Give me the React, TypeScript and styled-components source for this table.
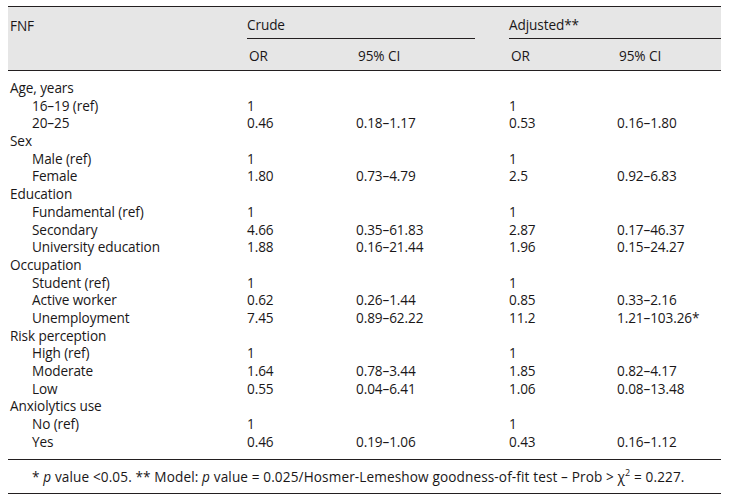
import React from 'react';
import styled, { createGlobalStyle } from 'styled-components';

const GlobalStyle = createGlobalStyle`
  body {
    margin: 0;
    padding: 6px 12px 0 8px;
    background: #fff;
    font-family: "Open Sans", "Liberation Sans", sans-serif;
    color: #1a1718;
  }
`;

const COLS = '239px 109px 153px 108px 1fr';

interface Row {
  label: string;
  sub?: boolean;
  values?: [string, string, string, string];
}

const rows: Row[] = [
  { label: 'Age, years' },
  { label: '16–19 (ref)', sub: true, values: ['1', '', '1', ''] },
  { label: '20–25', sub: true, values: ['0.46', '0.18–1.17', '0.53', '0.16–1.80'] },
  { label: 'Sex' },
  { label: 'Male (ref)', sub: true, values: ['1', '', '1', ''] },
  { label: 'Female', sub: true, values: ['1.80', '0.73–4.79', '2.5', '0.92–6.83'] },
  { label: 'Education' },
  { label: 'Fundamental (ref)', sub: true, values: ['1', '', '1', ''] },
  { label: 'Secondary', sub: true, values: ['4.66', '0.35–61.83', '2.87', '0.17–46.37'] },
  { label: 'University education', sub: true, values: ['1.88', '0.16–21.44', '1.96', '0.15–24.27'] },
  { label: 'Occupation' },
  { label: 'Student (ref)', sub: true, values: ['1', '', '1', ''] },
  { label: 'Active worker', sub: true, values: ['0.62', '0.26–1.44', '0.85', '0.33–2.16'] },
  { label: 'Unemployment', sub: true, values: ['7.45', '0.89–62.22', '11.2', '1.21–103.26*'] },
  { label: 'Risk perception' },
  { label: 'High (ref)', sub: true, values: ['1', '', '1', ''] },
  { label: 'Moderate', sub: true, values: ['1.64', '0.78–3.44', '1.85', '0.82–4.17'] },
  { label: 'Low', sub: true, values: ['0.55', '0.04–6.41', '1.06', '0.08–13.48'] },
  { label: 'Anxiolytics use' },
  { label: 'No (ref)', sub: true, values: ['1', '', '1', ''] },
  { label: 'Yes', sub: true, values: ['0.46', '0.19–1.06', '0.43', '0.16–1.12'] },
];

const Table = styled.div`
  width: 713px;
  font-size: 13.6px;
  letter-spacing: -0.1px;
`;

const Header = styled.div`
  display: grid;
  grid-template-columns: ${COLS};
  grid-template-rows: 32px 31px;
  background: #e6e6e6;
  border-top: 1px solid #231f20;
  border-bottom: 1px solid #231f20;
`;

const HeadCell = styled.div<{ $col: string; $row: number }>`
  grid-column: ${p => p.$col};
  grid-row: ${p => p.$row};
  display: flex;
  align-items: center;
  padding-left: 2px;
  padding-top: ${p => (p.$row === 1 ? 4 : 1)}px;
`;

const GroupHead = styled.div<{ $col: string; $gapRight: number }>`
  grid-column: ${p => p.$col};
  grid-row: 1;
  margin-right: ${p => p.$gapRight}px;
  display: flex;
  align-items: center;
  padding-top: 4px;
  border-bottom: 1px solid #231f20;
`;

const Body = styled.div`
  padding: 8px 0 9px;
  border-bottom: 1px solid #231f20;
`;

const DataRow = styled.div`
  display: grid;
  grid-template-columns: ${COLS};
  height: 17.7px;
  line-height: 17.7px;
  white-space: nowrap;
`;

const Label = styled.div<{ $sub?: boolean }>`
  padding-left: ${p => (p.$sub ? 24 : 2)}px;
`;

const Value = styled.div``;

const Note = styled.div`
  padding: 8px 0 8px 24px;
  line-height: 17px;
  letter-spacing: 0.12px;
  border-bottom: 1px solid #231f20;
  white-space: nowrap;
`;

const Sup = styled.sup`
  font-size: 9px;
  line-height: 0;
`;

export default function App() {
  return (
    <>
      <GlobalStyle />
      <Table>
        <Header>
          <HeadCell $col="1" $row={1}>FNF</HeadCell>
          <GroupHead $col="2 / 4" $gapRight={34}>Crude</GroupHead>
          <GroupHead $col="4 / 6" $gapRight={0}>Adjusted**</GroupHead>
          <HeadCell $col="2" $row={2}>OR</HeadCell>
          <HeadCell $col="3" $row={2}>95% CI</HeadCell>
          <HeadCell $col="4" $row={2}>OR</HeadCell>
          <HeadCell $col="5" $row={2}>95% CI</HeadCell>
        </Header>
        <Body>
          {rows.map((r, i) => (
            <DataRow key={i}>
              <Label $sub={r.sub}>{r.label}</Label>
              {r.values && r.values.map((v, j) => <Value key={j}>{v}</Value>)}
            </DataRow>
          ))}
        </Body>
        <Note>
          * <i>p</i> value &lt;0.05. ** Model: <i>p</i> value = 0.025/Hosmer-Lemeshow goodness-of-fit test – Prob &gt; χ<Sup>2</Sup> = 0.227.
        </Note>
      </Table>
    </>
  );
}
